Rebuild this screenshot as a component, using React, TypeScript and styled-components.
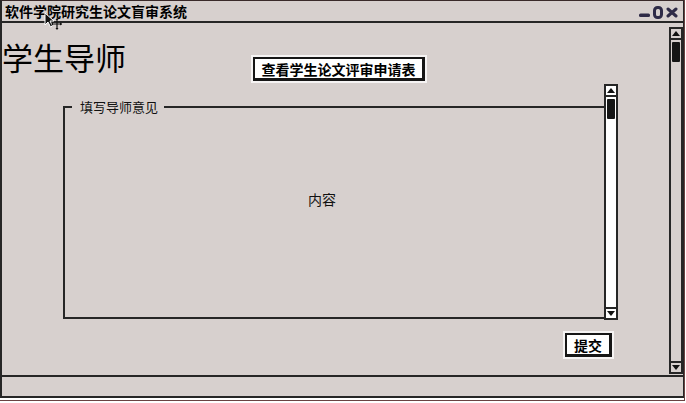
import styled, { createGlobalStyle } from 'styled-components';

const GlobalStyle = createGlobalStyle`
  html, body {
    margin: 0;
    padding: 0;
    background: #ffffff;
  }
  body {
    font-family: "Noto Sans CJK SC", "Noto Sans", sans-serif;
    color: #111;
  }
`;

const ink = '#262626';

export default function App() {
  return (
    <>
      <GlobalStyle />
      <SFrame>
        <SWindow>
          <STitleBar>
            <span className="title">软件学院研究生论文盲审系统</span>
            <SControls>
              <svg width="11" height="6" viewBox="0 0 11 6">
                <rect x="0" y="1.5" width="11" height="3.5" rx="1.5" fill="#2f2b47" />
              </svg>
              <svg width="10" height="13" viewBox="0 0 10 13">
                <rect x="1.5" y="1.5" width="7" height="10" rx="3" fill="none" stroke="#2f2b47" strokeWidth="3" />
              </svg>
              <svg width="12" height="11" viewBox="0 0 12 11">
                <path d="M2 2 L10 9 M10 2 L2 9" stroke="#2f2b47" strokeWidth="3" strokeLinecap="round" />
              </svg>
            </SControls>
          </STitleBar>
          <SMain>
            <SCanvas>
              <SHeaderRow>
                <SHeading>学生导师</SHeading>
                <SButton $width={172}>查看学生论文评审申请表</SButton>
              </SHeaderRow>
              <SFieldRow>
                <SGroup>
                  <SLegend>填写导师意见</SLegend>
                  <span>内容</span>
                </SGroup>
                <SScrollBar $white $height={236}>
                  <SArrow $dir="up" />
                  <SThumb />
                  <SArrow $dir="down" />
                </SScrollBar>
              </SFieldRow>
              <SSubmitRow>
                <SButton $width={47}>提交</SButton>
              </SSubmitRow>
            </SCanvas>
            <SScrollBar $main>
              <SArrow $dir="up" />
              <SThumb />
              <SArrow $dir="down" />
            </SScrollBar>
          </SMain>
          <SStatusBar />
        </SWindow>
        <SCursor width="18" height="18" viewBox="0 0 18 18">
          <path d="M1 1 L1 13 L4 10 L6.5 15 L8.5 14 L6 9 L10 9 Z" fill="#111" stroke="#fff" strokeWidth="1" />
          <path d="M13 7 L13 17 M8 12 L18 12" stroke="#111" strokeWidth="1.2" />
          <path d="M13 6 L11.5 8 L14.5 8 Z M13 18 L11.5 16 L14.5 16 Z M7 12 L9 10.5 L9 13.5 Z M18 12 L16 10.5 L16 13.5 Z" fill="#111" />
        </SCursor>
      </SFrame>
    </>
  );
}

const SFrame = styled.div`
  position: relative;
  width: 685px;
  height: 401px;
  border-right: 1px solid #6a4242;
  border-bottom: 1px solid #6a4242;
  box-sizing: border-box;
`;

const SWindow = styled.div`
  display: flex;
  flex-direction: column;
  width: 684px;
  height: 398px;
  box-sizing: border-box;
  background: #d7d0ce;
  border-top: 1px solid #3a2a2a;
  border-left: 2px solid ${ink};
  border-right: 1px solid ${ink};
  border-bottom: 2px solid ${ink};
`;

const STitleBar = styled.div`
  display: flex;
  align-items: center;
  justify-content: space-between;
  height: 20px;
  padding: 0 5px 0 3px;
  border-bottom: 2px solid ${ink};
  .title {
    font-size: 14px;
    font-weight: 700;
    line-height: 20px;
    color: #000;
  }
`;

const SControls = styled.div`
  display: flex;
  align-items: center;
  gap: 3px;
  padding-top: 2px;
  svg:first-child {
    margin-top: 5px;
  }
`;

const SMain = styled.div`
  flex: 1;
  display: flex;
  min-height: 0;
`;

const SCanvas = styled.div`
  flex: 1;
  display: flex;
  flex-direction: column;
`;

const SHeaderRow = styled.div`
  display: grid;
  grid-template-columns: 251px auto;
  align-items: start;
`;

const SHeading = styled.h1`
  margin: 16px 0 0 0;
  font-size: 31px;
  font-weight: 400;
  line-height: 36px;
  color: #000;
`;

const SButton = styled.button<{ $width: number }>`
  width: ${(p) => p.$width}px;
  height: 24px;
  margin-top: 34px;
  padding: 0;
  background: #fff;
  border: 2px solid #161616;
  border-right-width: 3px;
  border-bottom-width: 3px;
  box-shadow: 0 0 0 2px rgba(255, 255, 255, 0.75);
  font-family: "Noto Sans CJK SC", sans-serif;
  font-size: 14px;
  font-weight: 700;
  line-height: 18px;
  color: #000;
  cursor: pointer;
`;

const SFieldRow = styled.div`
  display: flex;
  align-items: flex-end;
  margin: 3px 0 0 61px;
`;

const SGroup = styled.div`
  position: relative;
  width: 542px;
  height: 213px;
  margin-right: -1px;
  margin-bottom: 1px;
  padding: 82px 0 0 243px;
  box-sizing: border-box;
  border-top: 2px solid ${ink};
  border-left: 2px solid ${ink};
  border-bottom: 2px solid ${ink};
  font-size: 14px;
  line-height: 18px;
  color: #111;
`;

const SLegend = styled.span`
  position: absolute;
  top: -10px;
  left: 7px;
  padding: 0 6px 0 8px;
  background: #d7d0ce;
  font-size: 13px;
  line-height: 18px;
`;

const SScrollBar = styled.div<{ $white?: boolean; $main?: boolean; $height?: number }>`
  display: flex;
  flex-direction: column;
  width: 14px;
  box-sizing: border-box;
  height: ${(p) => (p.$height ? `${p.$height}px` : 'auto')};
  margin: ${(p) => (p.$main ? '4px 0 1px 0' : '0')};
  background: ${(p) => (p.$white ? '#fff' : 'transparent')};
  border: 2px solid ${ink};
`;

const SArrow = styled.div<{ $dir: 'up' | 'down' }>`
  position: relative;
  height: 9px;
  flex: none;
  ${(p) => (p.$dir === 'up' ? `border-bottom: 2px solid ${ink};` : `border-top: 2px solid ${ink}; margin-top: auto;`)}
  &::after {
    content: '';
    position: absolute;
    left: 1px;
    top: 2px;
    border-left: 4px solid transparent;
    border-right: 4px solid transparent;
    ${(p) => (p.$dir === 'up' ? 'border-bottom: 5px solid #111;' : 'border-top: 5px solid #111;')}
  }
`;

const SThumb = styled.div`
  width: 8px;
  height: 20px;
  margin: 2px auto 0;
  background: #151515;
  border-radius: 1px;
`;

const SSubmitRow = styled.div`
  display: flex;
  justify-content: flex-end;
  padding-right: 57px;
  margin-top: -21px;
`;

const SStatusBar = styled.div`
  height: 19px;
  flex: none;
  border-top: 2px solid ${ink};
`;

const SCursor = styled.svg`
  position: absolute;
  left: 44px;
  top: 12px;
`;
